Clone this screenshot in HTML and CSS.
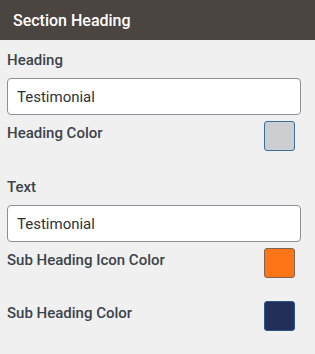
FILE: index.html
```html
<!DOCTYPE html>
<html lang="en">
<head>
  <meta charset="UTF-8">
  <meta name="viewport" content="width=device-width, initial-scale=1.0">
  <title>Section Heading</title>
  <link rel="stylesheet" href="styles.css">
</head>
<body>
  <div class="panel">
    <div class="panel-head">Section Heading</div>

    <div class="panel-body">
      <div class="field">
        <label class="field-label" for="heading">Heading</label>
        <input class="text-input" type="text" id="heading" value="Testimonial">
      </div>
      <div class="color-row">
        <span class="field-label">Heading Color</span>
        <span class="swatch swatch-grey"></span>
      </div>

      <div class="field field-text">
        <label class="field-label" for="text">Text</label>
        <input class="text-input" type="text" id="text" value="Testimonial">
      </div>
      <div class="color-row">
        <span class="field-label">Sub Heading Icon Color</span>
        <span class="swatch swatch-orange"></span>
      </div>
      <div class="color-row color-row-last">
        <span class="field-label">Sub Heading Color</span>
        <span class="swatch swatch-navy"></span>
      </div>
    </div>
  </div>
</body>
</html>
```

FILE: styles.css
```css
body {
  margin: 0;
  background: #f0f0f1;
  font-family: Roboto, 'Liberation Sans', sans-serif;
  color: #3c434a;
}

.panel-head {
  height: 40px;
  display: flex;
  align-items: center;
  padding-left: 13px;
  background: #4b4542;
  color: #ffffff;
  font-size: 16px;
  font-weight: 500;
}

.panel-body {
  padding: 10px 14px 0 7px;
}

.field {
  display: flex;
  flex-direction: column;
  gap: 8px;
}

.field-text {
  margin-top: 26px;
}

.field-label {
  font-size: 15px;
  font-weight: 500;
  line-height: 20px;
  color: #3c434a;
}

.text-input {
  box-sizing: border-box;
  width: 100%;
  height: 37px;
  margin: 0;
  padding: 0 9px;
  font-family: inherit;
  font-size: 15px;
  color: #2c3338;
  background: #ffffff;
  border: 1px solid #8c8f94;
  border-radius: 4px;
}

.color-row {
  display: flex;
  justify-content: space-between;
  align-items: flex-start;
  margin-top: 6px;
  padding-right: 6px;
}

.color-row .field-label {
  padding-top: 2px;
}

.color-row-last {
  margin-top: 23px;
}

.swatch {
  box-sizing: border-box;
  width: 31px;
  height: 30px;
  border-radius: 3px;
  border: 1px solid #7d6658;
}

.swatch-grey {
  background: #cdced2;
  border-color: #3a6f9f;
}

.swatch-orange {
  background: #fe7517;
  border-color: #7b6556;
}

.swatch-navy {
  background: #223059;
  border-color: #2b5687;
}
```
